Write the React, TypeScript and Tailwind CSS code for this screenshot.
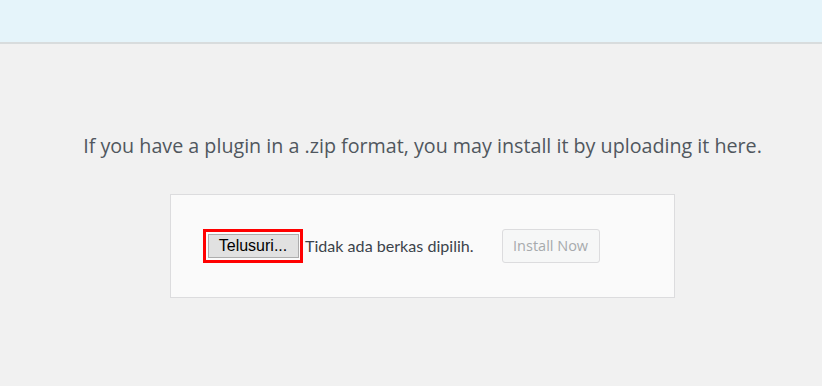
export default function App() {
  return (
    <div className="min-h-[386px] bg-[#f1f1f1] font-['Open_Sans',sans-serif]">
      {/* top bar */}
      <div className="h-[44px] border-b-2 border-[#d8dcdd] bg-[#e5f4fa]" />

      <div className="flex flex-col items-center pl-[23px] pt-[86px]">
        <p className="text-[19.7px] leading-[32px] text-[#50575e]">
          If you have a plugin in a .zip format, you may install it by uploading it here.
        </p>

        <div className="mt-[32px] flex h-[104px] w-[505px] items-center border border-[#dcdcde] bg-[#fafafa] pl-[32px]">
          <div className="flex items-center">
            <div className="flex h-[34px] w-[100px] items-center justify-center border-[3px] border-[#ff0000]">
              <button className="h-[24px] w-[91px] border border-[#adadad] bg-[#e1e1e1] font-['Liberation_Sans',sans-serif] text-[16px] leading-none text-black">
                Telusuri...
              </button>
            </div>
            <span className="ml-[2px] font-['Lato',sans-serif] text-[16.1px] text-[#3c434a]">
              Tidak ada berkas dipilih.
            </span>
          </div>
          <button className="ml-[28px] h-[34px] w-[98px] rounded-[3px] border border-[#dcdcde] bg-[#f6f7f7] text-[14.5px] text-[#a7aaad]">
            Install Now
          </button>
        </div>
      </div>
    </div>
  );
}
